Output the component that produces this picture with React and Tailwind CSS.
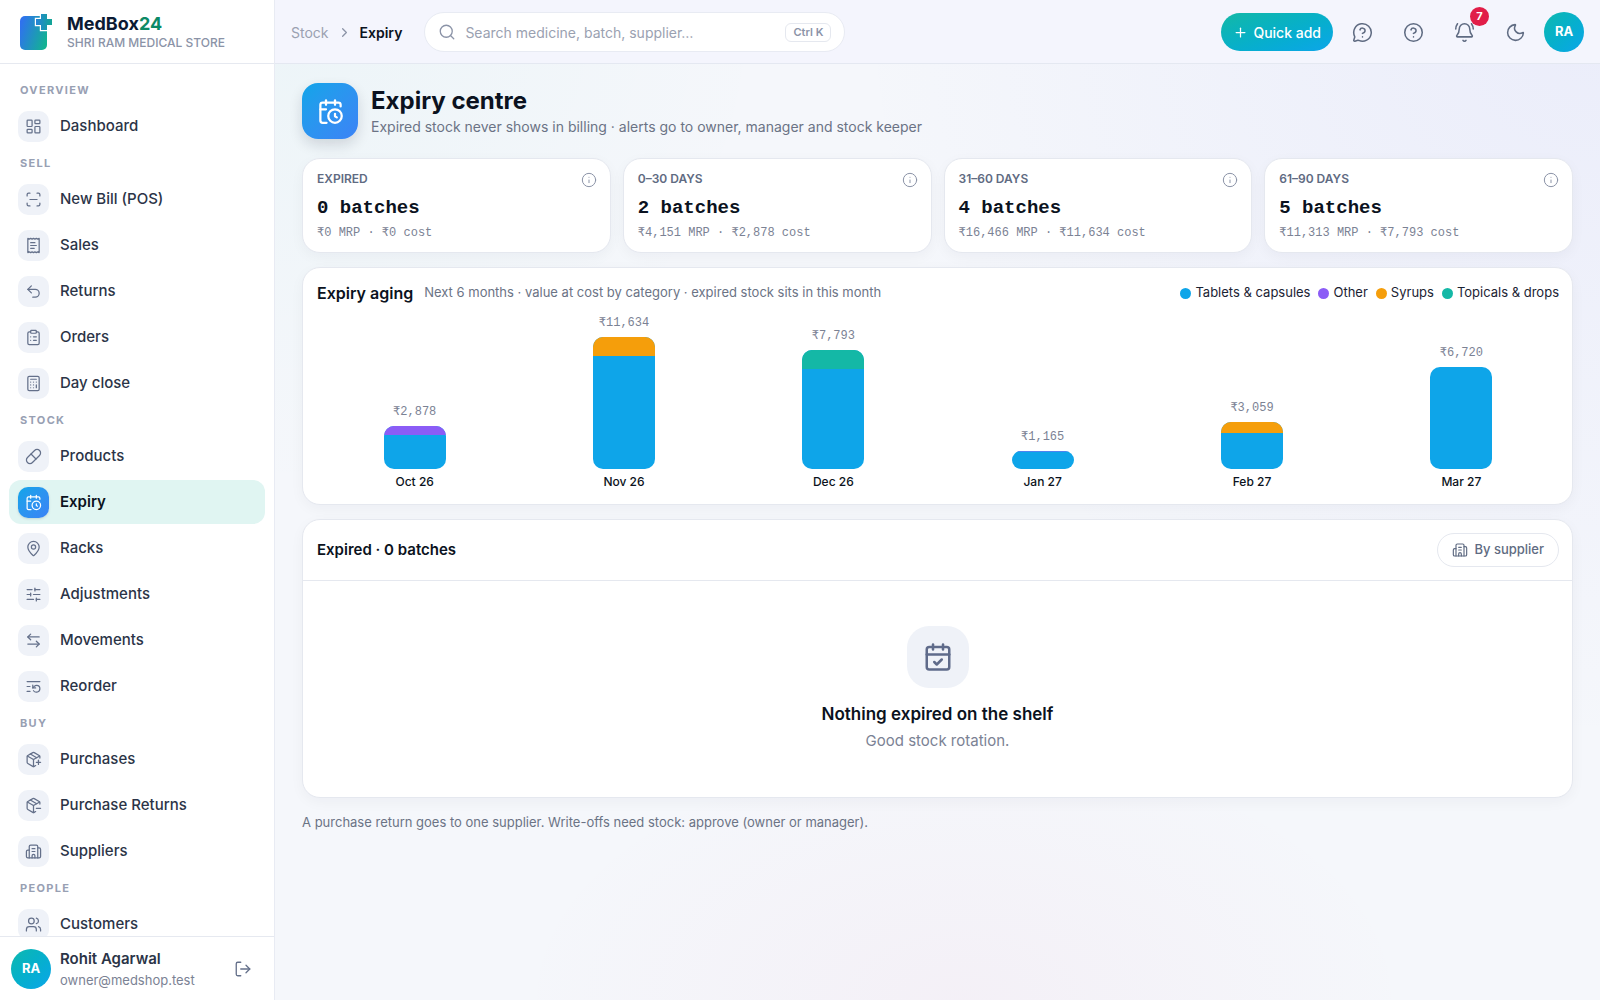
import React, { useState } from 'react';
import {
  ArrowLeftRight, BellRing, Building2, Calculator, CalendarCheck, CalendarClock, ChevronRight,
  ClipboardList, HelpCircle, Info, LayoutDashboard, ListRestart, LogOut, MapPin,
  MessageCircleQuestion, Moon, PackageMinus, PackagePlus, Pill, Plus, ScanLine,
  Search, SlidersHorizontal, Undo2, Users,
} from 'lucide-react';

function BillIcon({ size = 24, strokeWidth = 2 }) {
  return (
    <svg
      width={size}
      height={size}
      viewBox="0 0 24 24"
      fill="none"
      stroke="currentColor"
      strokeWidth={strokeWidth}
      strokeLinecap="round"
      strokeLinejoin="round"
      aria-hidden="true"
    >
      <path d="M4 2v20l2-1 2 1 2-1 2 1 2-1 2 1 2-1 2 1V2l-2 1-2-1-2 1-2-1-2 1-2-1-2 1Z" />
      <path d="M14 8H8" />
      <path d="M16 12H8" />
      <path d="M13 16H8" />
    </svg>
  );
}

const NAV = [
  { title: 'Overview', items: [{ label: 'Dashboard', icon: LayoutDashboard }] },
  {
    title: 'Sell',
    items: [
      { label: 'New Bill (POS)', icon: ScanLine },
      { label: 'Sales', icon: BillIcon },
      { label: 'Returns', icon: Undo2 },
      { label: 'Orders', icon: ClipboardList },
      { label: 'Day close', icon: Calculator },
    ],
  },
  {
    title: 'Stock',
    items: [
      { label: 'Products', icon: Pill },
      { label: 'Expiry', icon: CalendarClock, active: true },
      { label: 'Racks', icon: MapPin },
      { label: 'Adjustments', icon: SlidersHorizontal },
      { label: 'Movements', icon: ArrowLeftRight },
      { label: 'Reorder', icon: ListRestart },
    ],
  },
  {
    title: 'Buy',
    items: [
      { label: 'Purchases', icon: PackagePlus },
      { label: 'Purchase Returns', icon: PackageMinus },
      { label: 'Suppliers', icon: Building2 },
    ],
  },
  { title: 'People', items: [{ label: 'Customers', icon: Users }] },
];

const BUCKETS = [
  { label: 'Expired', batches: 0, mrp: '₹0', cost: '₹0' },
  { label: '0–30 days', batches: 2, mrp: '₹4,151', cost: '₹2,878' },
  { label: '31–60 days', batches: 4, mrp: '₹16,466', cost: '₹11,634' },
  { label: '61–90 days', batches: 5, mrp: '₹11,313', cost: '₹7,793' },
];

const LEGEND = [
  { label: 'Tablets & capsules', dot: 'bg-[#0ea5e9]' },
  { label: 'Other', dot: 'bg-[#8b5cf6]' },
  { label: 'Syrups', dot: 'bg-[#f59e0b]' },
  { label: 'Topicals & drops', dot: 'bg-[#14b8a6]' },
];

// top = height of the segment stacked above tablets, in px
const MONTHS = [
  { month: 'Oct 26', value: '₹2,878', height: 43, top: 9, color: 'bg-[#8b5cf6]' },
  { month: 'Nov 26', value: '₹11,634', height: 132, top: 19, color: 'bg-[#f59e0b]' },
  { month: 'Dec 26', value: '₹7,793', height: 119, top: 19, color: 'bg-[#14b8a6]' },
  { month: 'Jan 27', value: '₹1,165', height: 18, top: 1, color: 'bg-[#4f83ef]' },
  { month: 'Feb 27', value: '₹3,059', height: 47, top: 11, color: 'bg-[#f59e0b]' },
  { month: 'Mar 27', value: '₹6,720', height: 102, top: 0, color: '' },
];

const CARD = 'rounded-[18px] border border-[#e5e8ef] bg-white shadow-[0_4px_14px_rgba(15,23,42,0.04)]';

function Logo() {
  return (
    <svg width="34" height="38" viewBox="0 0 34 38" aria-hidden="true">
      <defs>
        <linearGradient id="box" x1="0" y1="0.3" x2="1" y2="0.7">
          <stop offset="0" stopColor="#2f72ee" />
          <stop offset="1" stopColor="#12b392" />
        </linearGradient>
        <linearGradient id="cross" x1="0" y1="0" x2="1" y2="0">
          <stop offset="0" stopColor="#2583d8" />
          <stop offset="1" stopColor="#12a594" />
        </linearGradient>
      </defs>
      <rect x="1" y="3" width="27" height="34" rx="5" fill="url(#box)" />
      <path
        d="M22 1h6v5h5v6h-5v5h-6v-5h-5V6h5z"
        fill="url(#cross)"
        stroke="#fff"
        strokeWidth="2.4"
        paintOrder="stroke"
      />
    </svg>
  );
}

function NavItem({ item }) {
  const Icon = item.icon;
  return (
    <a
      href="#"
      aria-current={item.active ? 'page' : undefined}
      className={
        item.active
          ? 'flex h-11 items-center gap-[11px] rounded-xl bg-[#e0f5f2] px-[9px] font-semibold text-[#0b1220]'
          : 'flex h-11 items-center gap-[11px] rounded-xl px-[9px] font-medium text-[#2b3447]'
      }
    >
      <span
        className={
          item.active
            ? 'flex size-[31px] items-center justify-center rounded-[10px] bg-linear-to-br from-[#0ea5e9] to-[#3b82f6] text-white shadow-sm'
            : 'flex size-[31px] items-center justify-center rounded-[10px] bg-[#eff2f8] text-[#64708a]'
        }
      >
        <Icon size={17} strokeWidth={1.75} />
      </span>
      {item.label}
    </a>
  );
}

function Sidebar() {
  return (
    <aside className="sticky top-0 flex h-screen w-[275px] shrink-0 flex-col border-r border-[#e8ebf3] bg-white">
      <div className="flex h-16 shrink-0 items-center gap-[14px] border-b border-[#e6e9f0] px-[19px]">
        <Logo />
        <div>
          <div className="text-[18px] leading-[22px] font-bold text-[#0b1a33]">
            MedBox<span className="text-[#0c8a66]">24</span>
          </div>
          <div className="text-[12px] leading-[16px] font-medium text-[#8b93a7] uppercase">
            Shri Ram Medical Store
          </div>
        </div>
      </div>

      <nav className="flex-1 overflow-y-auto px-[9px] pt-[11px] text-[15px] [scrollbar-width:none]">
        {NAV.map((group) => (
          <div key={group.title}>
            <div className="flex h-[29px] items-center px-[11px] pt-[2px] text-[11px] font-bold tracking-[0.12em] text-[#98a0b3] uppercase">
              {group.title}
            </div>
            <div className="flex flex-col gap-0.5">
              {group.items.map((item) => (
                <NavItem key={item.label} item={item} />
              ))}
            </div>
          </div>
        ))}
      </nav>

      <div className="flex h-16 shrink-0 items-center gap-[9px] border-t border-[#e6e9f0] pr-[18px] pl-[11px]">
        <Avatar />
        <div className="min-w-0 flex-1">
          <div className="text-[15px] leading-[22px] font-semibold text-[#2b3447]">Rohit Agarwal</div>
          <div className="text-[13px] leading-5 text-[#7b8294]">owner@medshop.test</div>
        </div>
        <button type="button" aria-label="Log out" className="p-1 text-[#64708a]">
          <LogOut size={18} strokeWidth={1.75} />
        </button>
      </div>
    </aside>
  );
}

function Avatar() {
  return (
    <span className="flex size-10 shrink-0 items-center justify-center rounded-full bg-linear-to-br from-[#10b8ae] to-[#0ea5e9] text-[13px] font-bold text-white">
      RA
    </span>
  );
}

function IconButton({ label, children }) {
  return (
    <button
      type="button"
      aria-label={label}
      className="relative flex size-11 items-center justify-center rounded-full text-[#5f6b82]"
    >
      {children}
    </button>
  );
}

function Topbar() {
  const [query, setQuery] = useState('');

  return (
    <header className="sticky top-0 z-10 flex h-16 items-center border-b border-[#e4e8f1] bg-[#f4f5fd] px-4 pt-px">
      <div className="flex items-center gap-2 text-[14px]">
        <a href="#" className="text-[#9aa1b1]">Stock</a>
        <ChevronRight size={15} className="text-[#8b93a7]" />
        <span className="font-semibold text-[#0b1220]">Expiry</span>
      </div>

      <label className="ml-[22px] flex h-10 w-[421px] items-center gap-[9px] rounded-full border border-[#e8ebf3] bg-white px-[13px]">
        <Search size={18} strokeWidth={1.75} className="text-[#8b93a7]" />
        <input
          type="text"
          aria-label="Search"
          value={query}
          onChange={(e) => setQuery(e.target.value)}
          placeholder="Search medicine, batch, supplier…"
          className="min-w-0 flex-1 bg-transparent text-[14px] outline-none placeholder:text-[#9aa1b1]"
        />
        <kbd className="rounded-md border border-[#e5e8ef] px-[7px] font-[Inter,sans-serif] text-[11px] leading-[17px] font-semibold text-[#8b93a7]">
          Ctrl K
        </kbd>
      </label>

      <div className="ml-auto flex items-center gap-[7px]">
        <button
          type="button"
          className="flex h-[38px] items-center gap-[5px] rounded-full bg-linear-to-br from-[#14b8a6] to-[#0ea5e9] px-3 text-[14px] font-medium text-white"
        >
          <Plus size={15} />
          Quick add
        </button>
        <IconButton label="Support">
          <MessageCircleQuestion size={21} strokeWidth={1.75} />
        </IconButton>
        <IconButton label="Help">
          <HelpCircle size={21} strokeWidth={1.75} />
        </IconButton>
        <IconButton label="Notifications">
          <BellRing size={21} strokeWidth={1.75} />
          <span className="absolute -top-[3px] right-[-3px] flex size-[19px] items-center justify-center rounded-full bg-[#e11d48] text-[11px] font-bold text-white">
            7
          </span>
        </IconButton>
        <IconButton label="Dark mode">
          <Moon size={21} strokeWidth={1.75} />
        </IconButton>
        <Avatar />
      </div>
    </header>
  );
}

function BucketCard({ bucket }) {
  return (
    <div className={`${CARD} pt-[11px] pr-[13px] pb-[9px] pl-[14px]`}>
      <div className="flex items-start justify-between">
        <span className="text-[12px] leading-[18px] font-semibold text-[#5f6b82] uppercase">{bucket.label}</span>
        <button type="button" aria-label="About this bucket" className="pt-0.5 text-[#8b93a7]">
          <Info size={16} strokeWidth={1.5} />
        </button>
      </div>
      <div className="mt-[5px] font-['Liberation_Mono',monospace] text-[19px] leading-[30px] font-bold text-[#0b1220]">
        {bucket.batches} batches
      </div>
      <div className="font-['Liberation_Mono',monospace] text-[12px] leading-5 text-[#7b8294]">
        {bucket.mrp} MRP · {bucket.cost} cost
      </div>
    </div>
  );
}

function AgingChart() {
  return (
    <section className={`${CARD} pt-[13px] pr-[13px] pb-[13px] pl-[14px]`}>
      <div className="flex items-center justify-between">
        <div className="flex items-center gap-[11px]">
          <h2 className="text-[16px] leading-6 font-semibold text-[#0b1220]">Expiry aging</h2>
          <span className="text-[13px] text-[#6b7385]">
            Next 6 months · value at cost by category · expired stock sits in this month
          </span>
        </div>
        <ul className="flex items-center gap-2 text-[13px] text-[#1b2333]">
          {LEGEND.map((entry) => (
            <li key={entry.label} className="flex items-center gap-1">
              <span className={`size-[11px] rounded-full ${entry.dot}`} />
              {entry.label}
            </li>
          ))}
        </ul>
      </div>

      <div className="mt-2 grid h-[178px] grid-cols-6 gap-[14px]">
        {MONTHS.map((m) => (
          <div key={m.month} className="flex flex-col items-center justify-end">
            <span className="mb-1 font-['Liberation_Mono',monospace] text-[12px] leading-5 text-[#7b8294]">
              {m.value}
            </span>
            <div
              className="w-[62px] shrink-0 overflow-hidden rounded-[10px] bg-[#0ea5e9]"
              style={{ height: m.height }}
            >
              <div className={m.color} style={{ height: m.top }} />
            </div>
            <span className="mt-[3px] text-[12px] leading-5 font-medium text-[#0b1220]">{m.month}</span>
          </div>
        ))}
      </div>
    </section>
  );
}

function ExpiredList() {
  return (
    <section className={CARD}>
      <div className="flex items-center justify-between border-b border-[#e5e8ef] py-[13px] pr-[13px] pl-[14px]">
        <h2 className="text-[15px] font-semibold text-[#0b1220]">Expired · 0 batches</h2>
        <button
          type="button"
          className="flex h-[34px] items-center gap-[6px] rounded-full border border-[#e5e8ef] bg-white px-[14px] text-[13px] font-medium text-[#5f6b82]"
        >
          <Building2 size={16} strokeWidth={1.75} />
          By supplier
        </button>
      </div>

      {/* Empty state */}
      <div className="flex flex-col items-center pt-[45px] pb-[44px]">
        <div className="flex size-[62px] items-center justify-center rounded-[22px] bg-[#eff2f8] text-[#5f6b8a]">
          <CalendarCheck size={30} />
        </div>
        <p className="mt-[13px] text-[17px] leading-[26px] font-semibold text-[#0b1220]">
          Nothing expired on the shelf
        </p>
        <p className="mt-[2px] text-[15px] leading-6 text-[#7b8294]">Good stock rotation.</p>
      </div>
    </section>
  );
}

export default function App() {
  return (
    <div className="flex min-h-screen bg-[#f5f7fb] font-[Inter,sans-serif] text-[#0b1220]">
      <Sidebar />
      <div className="min-w-0 flex-1 bg-[radial-gradient(circle_at_0%_0%,rgba(20,184,166,0.04),transparent_30%),radial-gradient(circle_at_100%_0%,rgba(99,102,241,0.07),transparent_45%),radial-gradient(450px_260px_at_52%_100%,rgba(217,70,140,0.04),transparent)]">
        <Topbar />
        <main className="flex flex-col gap-[14px] px-[27px] py-[19px]">
          <div className="mb-[5px] flex items-center gap-[13px]">
            <div className="flex size-14 items-center justify-center rounded-2xl bg-linear-to-br from-[#0ea5e9] to-[#3b82f6] text-white shadow-[0_6px_14px_rgba(15,23,42,0.14)]">
              <CalendarClock size={27} />
            </div>
            <div className="pt-1">
              <h1 className="text-[24px] leading-7 font-bold">Expiry centre</h1>
              <p className="text-[14px] leading-6 text-[#6b7385]">
                Expired stock never shows in billing · alerts go to owner, manager and stock keeper
              </p>
            </div>
          </div>

          <div className="grid grid-cols-4 gap-3">
            {BUCKETS.map((bucket) => (
              <BucketCard key={bucket.label} bucket={bucket} />
            ))}
          </div>

          <AgingChart />
          <ExpiredList />

          <p className="text-[13px] leading-5 text-[#6b7385]">
            A purchase return goes to one supplier. Write-offs need stock: approve (owner or manager).
          </p>
        </main>
      </div>
    </div>
  );
}
